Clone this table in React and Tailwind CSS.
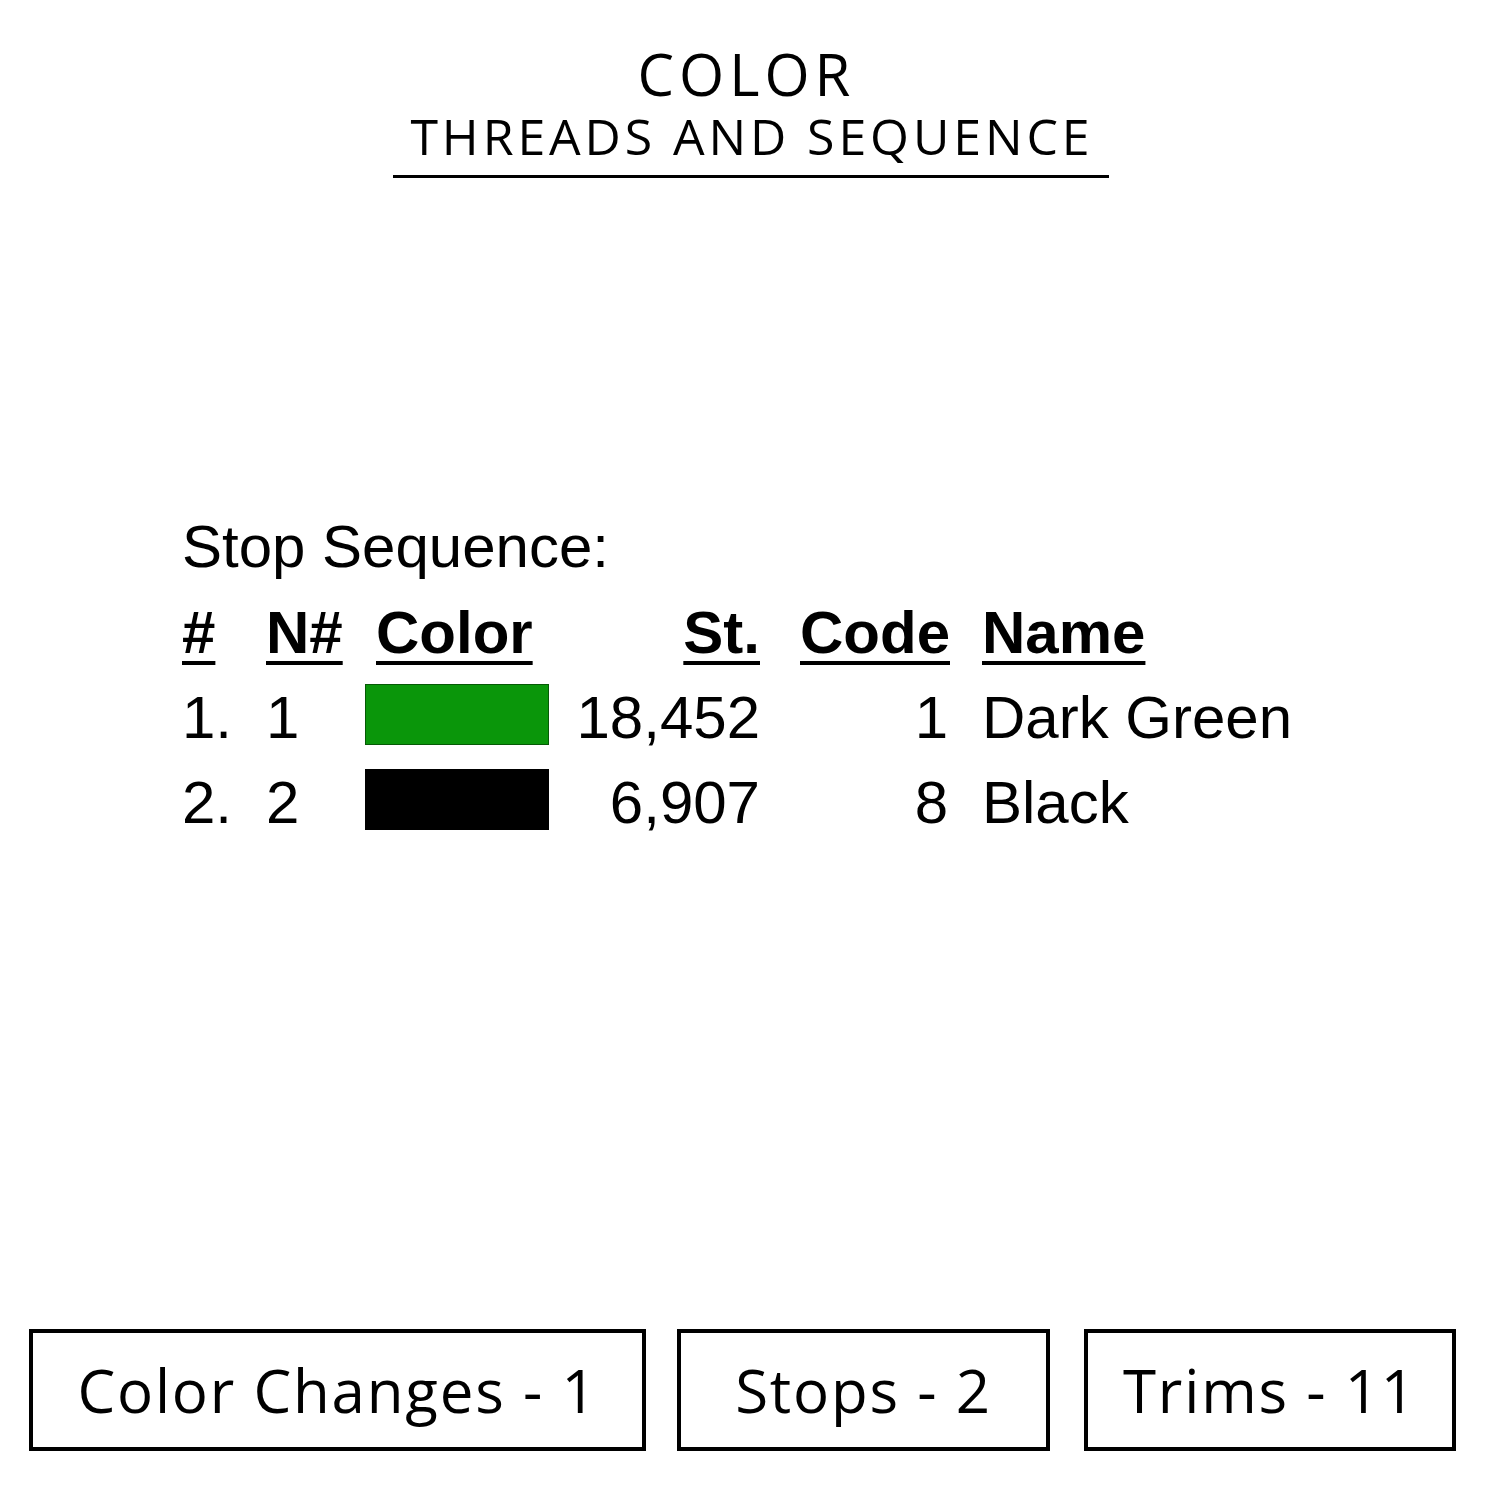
import React from "react";

const rows = [
  { idx: "1.", n: "1", swatch: "bg-[#0a960a]", st: "18,452", code: "1", name: "Dark Green" },
  { idx: "2.", n: "2", swatch: "bg-black", st: "6,907", code: "8", name: "Black" },
];

const Stat = ({ label, className }) => (
  <div
    className={`flex h-[122px] items-center justify-center border-[4px] border-black ${className}`}
  >
    <span className="text-[60px] leading-none tracking-[1.8px] text-black">{label}</span>
  </div>
);

const App = () => {
  return (
    <div className="flex h-[1500px] w-[1500px] flex-col bg-white font-['Open_Sans',sans-serif] text-black">
      {/* Title */}
      <div className="flex flex-col items-center pt-[45px]">
        <h1 className="text-[58px] leading-none font-medium tracking-[5px] -mr-[5px] -ml-[12px]">COLOR</h1>
        <h2 className="mt-[8px] text-[50px] leading-none font-normal tracking-[3.9px] -mr-[4px]">THREADS AND SEQUENCE</h2>
        <div className="mt-[14px] ml-[2px] h-[3px] w-[716px] bg-black" />
      </div>

      {/* Stop sequence table */}
      <div className="mt-[326px] ml-[182px] font-['Liberation_Sans',Arial,sans-serif] text-[60px] leading-[85px]">
        <p className="mb-[1px]">Stop Sequence:</p>
        <div className="flex font-bold underline decoration-[4px] underline-offset-[8px]">
          <span className="w-[84px]">#</span>
          <span className="w-[99px]">N#</span>
          <span className="w-[195px] pl-[11px]">Color</span>
          <span className="w-[200px] text-right">St.</span>
          <span className="w-[190px] text-right">Code</span>
          <span className="pl-[32px]">Name</span>
        </div>
        {rows.map((r) => (
          <div key={r.idx} className="flex items-center">
            <span className="w-[84px]">{r.idx}</span>
            <span className="w-[99px]">{r.n}</span>
            <span className="w-[195px]">
              <span className={`mb-[7px] block h-[61px] w-[184px] border border-black/40 ${r.swatch}`} />
            </span>
            <span className="w-[200px] text-right">{r.st}</span>
            <span className="w-[188px] text-right">{r.code}</span>
            <span className="pl-[34px]">{r.name}</span>
          </div>
        ))}
      </div>

      {/* Bottom stats */}
      <div className="mt-auto mb-[49px] flex gap-[31px] pl-[29px]">
        <Stat label="Color Changes - 1" className="w-[617px]" />
        <Stat label="Stops - 2" className="w-[373px]" />
        <Stat label="Trims - 11" className="ml-[3px] w-[372px]" />
      </div>
    </div>
  );
};

export default App;
